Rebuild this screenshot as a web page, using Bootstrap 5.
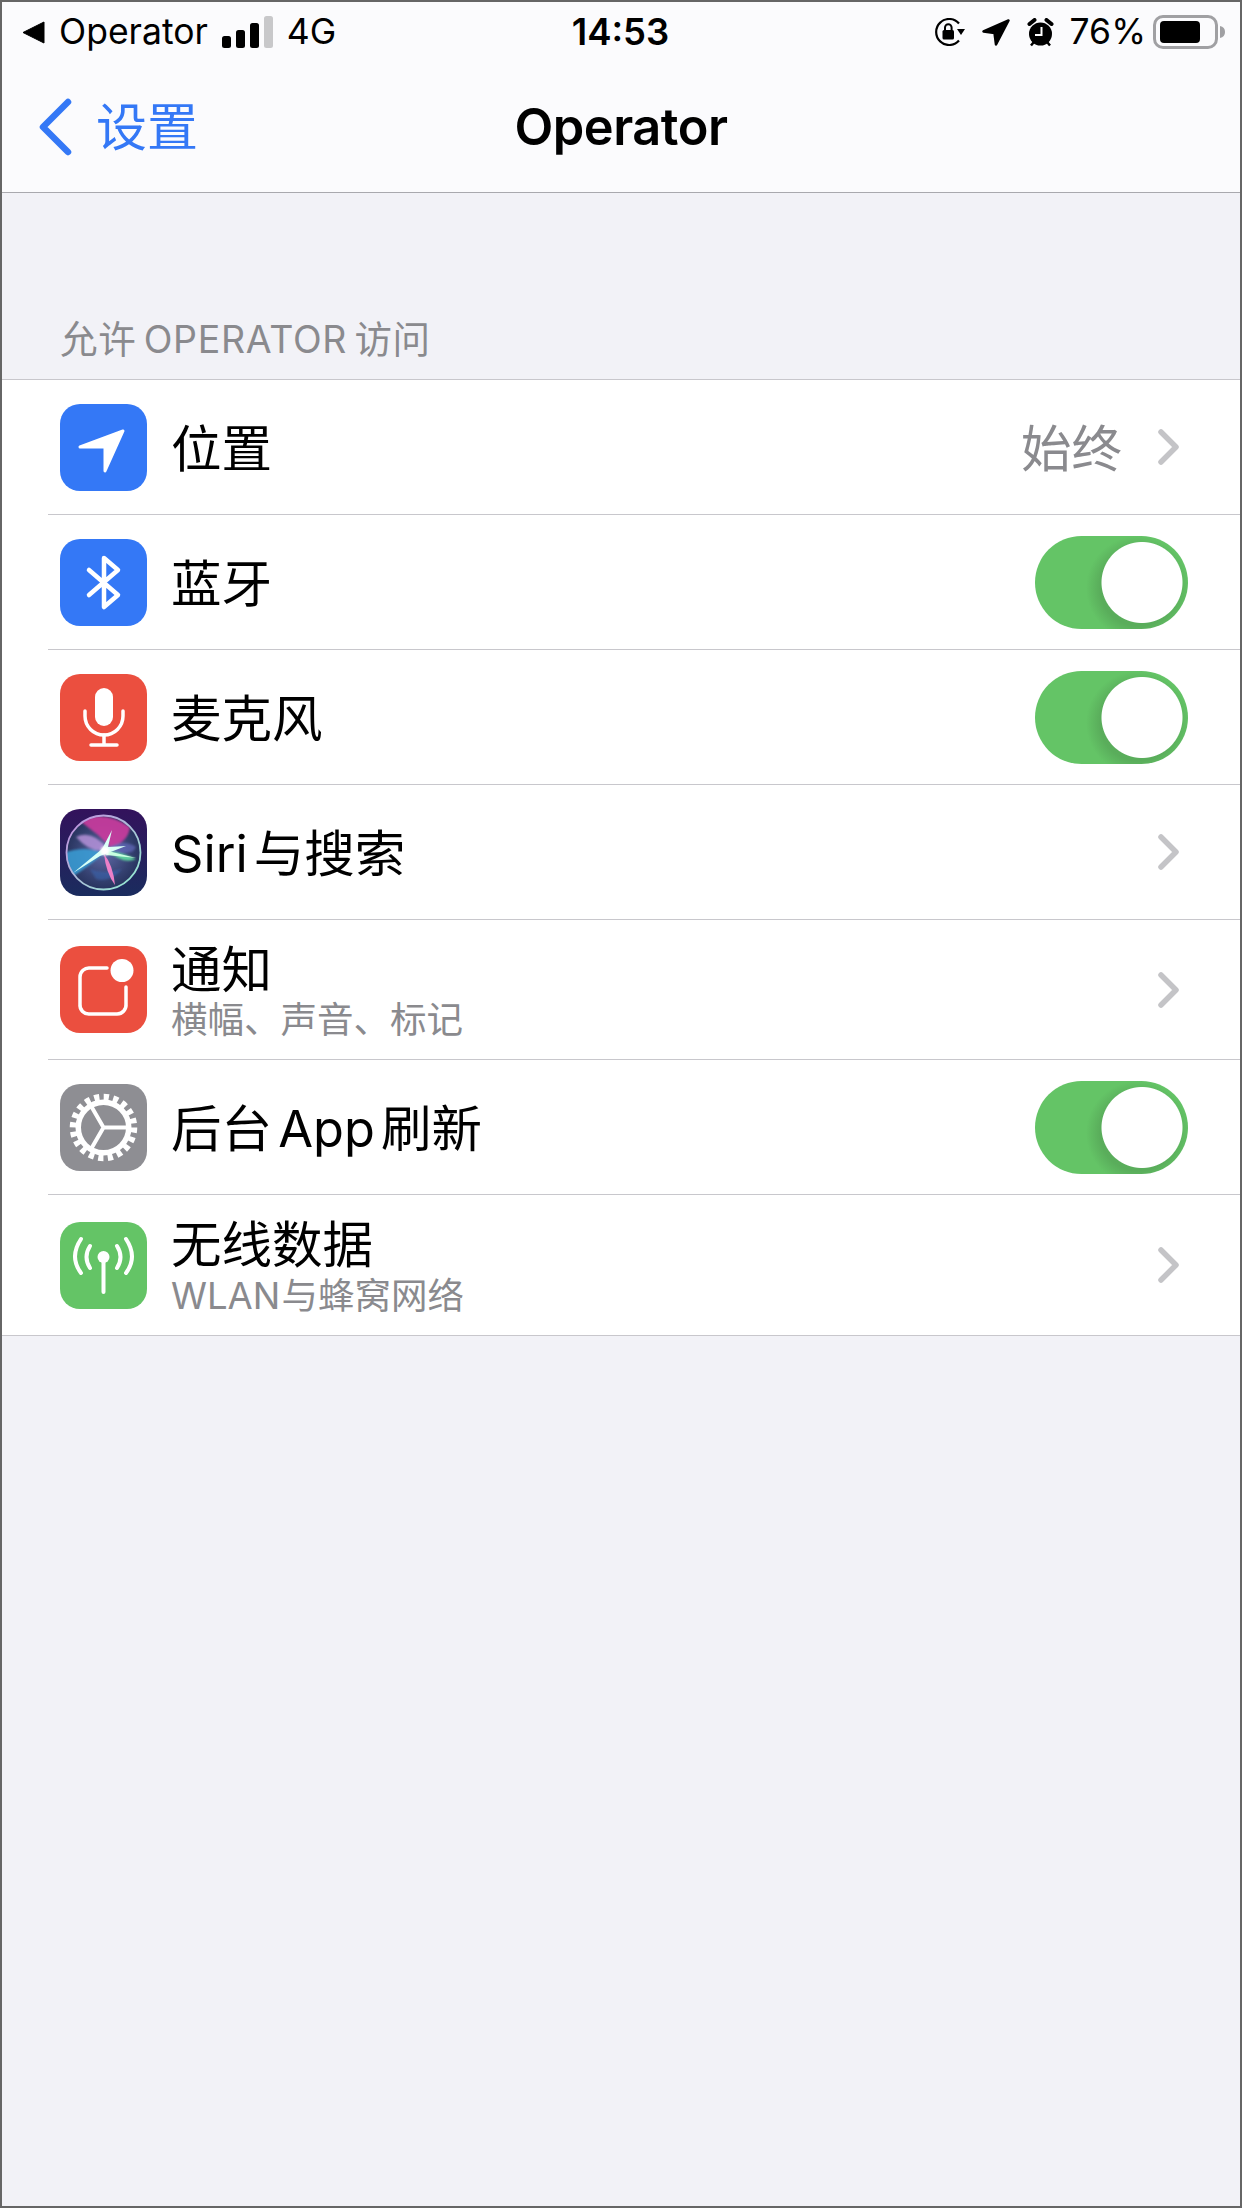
<!DOCTYPE html>
<html lang="zh">
<head>
  <meta charset="UTF-8" />
  <meta name="viewport" content="width=device-width, initial-scale=1.0"/>
  <title>Operator</title>
  <link href="https://cdn.jsdelivr.net/npm/bootstrap@5.3.0/dist/css/bootstrap.min.css" rel="stylesheet"/>
  <style>
    html, body {
      height: 100%;
    }
    body {
      background-color: #f2f2f7;
      font-family: Inter, "Noto Sans CJK SC", sans-serif;
      color: #000;
    }
    .phone-frame {
      height: 2208px;
      border: 2px solid #666;
      overflow: hidden;
    }
    .top-area {
      height: 191px;
      background-color: #fbfbfd;
      border-bottom: 1px solid #a9a9ae;
    }
    .status-row {
      height: 60px;
      padding: 0 14px 0 20px;
      font-size: 35.5px;
      line-height: 1;
      display: grid;
      grid-template-columns: 1fr auto 1fr;
      align-items: center;
    }
    .status-time {
      font-weight: 600;
      font-size: 36.5px;
      margin-right: 7px;
    }
    .gap-status {
      margin-left: 14px;
    }
    .gap-right {
      margin-right: 17px;
    }
    .gap-alarm {
      margin-right: 16px;
    }
    .battery-icon {
      margin-left: 7px;
    }
    .title-row {
      height: 130px;
      display: grid;
      grid-template-columns: 1fr auto 1fr;
      align-items: center;
      padding: 0 36px;
    }
    .back-link {
      color: #3478f6;
      font-size: 51px;
      text-decoration: none;
      line-height: 1;
    }
    .back-link svg {
      margin-right: 24px;
    }
    .page-title {
      font-size: 50.5px;
      font-weight: 600;
      letter-spacing: -0.5px;
    }
    .section-label {
      height: 186px;
      padding: 0 0 0 58px;
      color: #8a8a8e;
      font-size: 37.5px;
      line-height: 1;
      letter-spacing: 0.7px;
      word-spacing: -4px;
    }
    .label-text {
      padding-bottom: 21px;
    }
    .perm-list {
      background-color: #fff;
      border-top: 1px solid #c8c7cc;
      border-bottom: 1px solid #c8c7cc;
    }
    .perm-row {
      height: 135px;
      margin-left: 46px;
      padding-left: 12px;
      padding-right: 59px;
      border-bottom: 1px solid #c8c7cc;
      font-size: 50.5px;
      line-height: 1;
    }
    .perm-row.tall {
      height: 140px;
    }
    .perm-row:last-child {
      border-bottom: 0;
    }
    .row-text {
      padding-top: 4px;
      word-spacing: -8px;
    }
    .app-icon {
      width: 87px;
      height: 87px;
      border-radius: 20px;
      flex-shrink: 0;
      margin-right: 24px;
    }
    .icon-blue { background-color: #3478f6; }
    .icon-red { background-color: #eb4f3f; }
    .icon-gray { background-color: #8e8e93; }
    .icon-green { background-color: #64c466; }
    .sub-text {
      color: #8a8a8e;
      font-size: 36.5px;
      margin-top: 7px;
      word-spacing: -9px;
    }
    .side-value {
      color: #8a8a8e;
      margin-right: 35px;
      padding-top: 4px;
    }
    .ios-toggle.form-check-input {
      width: 153px;
      height: 93px;
      margin: 0 -7px 0 0;
      border: 0;
      border-radius: 47px;
      background-color: #64c466;
      background-position: 0 0;
      background-size: auto;
      background-image:
        radial-gradient(circle 41px at 107px 46.5px, #fff 40px, rgba(255,255,255,0) 41px),
        radial-gradient(circle 52px at 103px 52px, rgba(70,130,70,.35) 38px, rgba(100,196,102,0) 52px);
      box-shadow: none;
    }
  </style>
</head>
<body>
  <div class="phone-frame d-flex flex-column">
    <div class="top-area">
      <div class="status-row">
        <div class="d-flex align-items-center">
          <svg width="23" height="23" viewBox="0 0 23 23"><path d="M22 1 V22 L1 11.500 Z" fill="#000" stroke="#000" stroke-linejoin="round"/></svg>
          <span class="gap-status">Operator</span>
          <svg width="51" height="32" viewBox="0 0 51 32" class="gap-status"><rect x="0" y="20" width="9" height="12" rx="2.500" fill="#000"/><rect x="14" y="14" width="9" height="18" rx="2.500" fill="#000"/><rect x="28" y="7" width="9" height="25" rx="2.500" fill="#000"/><rect x="42" y="0" width="9" height="32" rx="2.500" fill="#c8c8ca"/></svg>
          <span class="gap-status">4G</span>
        </div>
        <div class="status-time">14:53</div>
        <div class="d-flex align-items-center justify-content-end">
          <svg width="31" height="28" viewBox="0 0 31 28" class="gap-right"><path d="M25 22.500 A13 13 0 1 1 25 5.500" fill="none" stroke="#000" stroke-width="2.200"/><path d="M23 11 h8 l-4 6 z" fill="#000"/><rect x="8.500" y="12" width="11.500" height="9.500" rx="1.500" fill="#000"/><path d="M11 12 v-2.500 a3.300 3.300 0 0 1 6.600 0 v2.500" fill="none" stroke="#000" stroke-width="2"/></svg>
          <svg width="28" height="27" viewBox="0 0 28 27" class="gap-right"><path d="M26.500 1.500 L14 25.500 L12.500 14 L1.500 12.500 Z" fill="#000" stroke="#000" stroke-width="2.500" stroke-linejoin="round"/></svg>
          <svg width="27" height="29" viewBox="0 0 27 29" class="gap-alarm"><circle cx="13.500" cy="16" r="11.500" fill="#000"/><path d="M2.500 6 L7.500 2 M24.500 6 L19.500 2" stroke="#000" stroke-width="4" stroke-linecap="round"/><path d="M4 27.500 l2.500 -3 M23 27.500 l-2.500 -3" stroke="#000" stroke-width="2.500"/><path d="M14.500 9 v8 h-6.500" fill="none" stroke="#fff" stroke-width="2"/></svg>
          <span>76%</span>
          <svg width="73" height="34" viewBox="0 0 73 34" class="battery-icon flex-shrink-0"><rect x="1.500" y="1.500" width="62" height="31" rx="8.500" fill="none" stroke="#a0a0a3" stroke-width="3"/><rect x="7" y="6" width="40" height="22" rx="4" fill="#000"/><path d="M67 11 q5 1 5 6 t-5 6 z" fill="#a0a0a3"/></svg>
        </div>
      </div>
      <div class="title-row">
        <a href="#" class="back-link d-flex align-items-center">
          <svg width="34" height="58" viewBox="0 0 34 58"><path d="M30 4 L5 29 L30 54" fill="none" stroke="#3478f6" stroke-width="6.500" stroke-linecap="round" stroke-linejoin="round"/></svg>
          <span>设置</span>
        </a>
        <div class="page-title">Operator</div>
        <div></div>
      </div>
    </div>

    <div class="section-label d-flex align-items-end">
      <div class="label-text">允许 OPERATOR 访问</div>
    </div>

    <div class="perm-list">
      <div class="perm-row d-flex align-items-center">
        <div class="app-icon icon-blue">
          <svg width="87" height="87" viewBox="0 0 87 87"><path d="M20 43 L63 27 L45 67 V43 Z" fill="#fff" stroke="#fff" stroke-width="3" stroke-linejoin="round"/></svg>
        </div>
        <div class="row-text flex-grow-1">位置</div>
        <div class="side-value">始终</div>
        <svg width="24" height="40" viewBox="0 0 24 40"><path d="M4 5 L19 20 L4 35" fill="none" stroke="#c4c4c7" stroke-width="5.500" stroke-linecap="round" stroke-linejoin="round"/></svg>
      </div>
      <div class="perm-row d-flex align-items-center">
        <div class="app-icon icon-blue">
          <svg width="87" height="87" viewBox="0 0 87 87"><path d="M29 31 L58 56 L44 68 V19 L58 31 L29 56" fill="none" stroke="#fff" stroke-width="4.500" stroke-linecap="round" stroke-linejoin="round"/></svg>
        </div>
        <div class="row-text flex-grow-1">蓝牙</div>
        <input class="form-check-input ios-toggle" type="checkbox" checked aria-label="蓝牙"/>
      </div>
      <div class="perm-row d-flex align-items-center">
        <div class="app-icon icon-red">
          <svg width="87" height="87" viewBox="0 0 87 87"><rect x="35" y="14" width="18" height="38" rx="9" fill="#fff"/><path d="M25 37 V42 A19 19 0 0 0 63 42 V37" fill="none" stroke="#fff" stroke-width="3.500" stroke-linecap="round"/><path d="M44 61 V71 M31 71 H57" fill="none" stroke="#fff" stroke-width="3.500" stroke-linecap="round"/></svg>
        </div>
        <div class="row-text flex-grow-1">麦克风</div>
        <input class="form-check-input ios-toggle" type="checkbox" checked aria-label="麦克风"/>
      </div>
      <div class="perm-row d-flex align-items-center">
        <div class="app-icon">
          <svg width="87" height="87" viewBox="0 0 87 87">
            <defs>
              <linearGradient id="siriBg" x1="0" y1="0" x2="0" y2="1"><stop offset="0" stop-color="#33125c"/><stop offset="1" stop-color="#1a2c5e"/></linearGradient>
              <radialGradient id="siriBall" cx=".5" cy=".5" r=".5"><stop offset="0" stop-color="#5f6aa8"/><stop offset=".75" stop-color="#34406f"/><stop offset="1" stop-color="#28345f"/></radialGradient>
              <linearGradient id="siriRing" x1="0" y1="0" x2="1" y2="1"><stop offset="0" stop-color="#c58ae0"/><stop offset="1" stop-color="#90f0d0"/></linearGradient>
              <filter id="siriBlur"><feGaussianBlur stdDeviation="1.200"/></filter>
              <filter id="siriSoft"><feGaussianBlur stdDeviation=".5"/></filter>
              <clipPath id="siriClip"><circle cx="43.500" cy="43.500" r="37"/></clipPath>
            </defs>
            <rect width="87" height="87" rx="20" fill="url(#siriBg)"/>
            <circle cx="43.500" cy="43.500" r="37" fill="url(#siriBall)"/>
            <g clip-path="url(#siriClip)">
              <g filter="url(#siriBlur)">
                <path d="M20 12 Q44 0 70 18 Q68 34 50 38 Q42 30 38 26 Q30 20 20 12 Z" fill="#cc3a9e" opacity=".9"/>
                <path d="M16 28 Q32 20 48 40 Q32 46 16 28 Z" fill="#b490d8" opacity=".85"/>
                <path d="M4 44 Q24 36 44 44 Q28 58 12 68 Z" fill="#3aa0d8" opacity=".85"/>
                <path d="M50 38 Q64 30 76 38 Q72 48 50 42 Z" fill="#6a70c8" opacity=".6"/>
                <path d="M48 42 Q64 44 76 50 Q64 56 48 42 Z" fill="#5fd8a0" opacity=".95"/>
                <path d="M30 60 Q44 66 62 60 Q50 74 36 70 Z" fill="#3a68b8" opacity=".5"/>
              </g>
              <g filter="url(#siriSoft)">
                <path d="M44 45 Q53 56 55 76 Q46 64 44 45 Z" fill="#ec80c8"/>
                <path d="M13 64 L42 40 L52 21 L48 38 L66 37 L48 44 L40 47 Z" fill="#d8fff6"/>
                <path d="M48 42 L76 49 L46 46 Z" fill="#c8ffe0"/>
              </g>
              <circle cx="45" cy="42" r="4.500" fill="#fff" filter="url(#siriBlur)"/>
            </g>
            <circle cx="43.500" cy="43.500" r="37" fill="none" stroke="url(#siriRing)" stroke-width="1.800"/>
          </svg>
        </div>
        <div class="row-text flex-grow-1">Siri 与搜索</div>
        <svg width="24" height="40" viewBox="0 0 24 40"><path d="M4 5 L19 20 L4 35" fill="none" stroke="#c4c4c7" stroke-width="5.500" stroke-linecap="round" stroke-linejoin="round"/></svg>
      </div>
      <div class="perm-row tall d-flex align-items-center">
        <div class="app-icon icon-red">
          <svg width="87" height="87" viewBox="0 0 87 87"><path d="M47 22 H30 A9 9 0 0 0 20 31 V58 A9 9 0 0 0 30 68 H57 A9 9 0 0 0 66 58 V41" fill="none" stroke="#fff" stroke-width="3.500" stroke-linecap="round"/><circle cx="62" cy="24.500" r="11.500" fill="#fff"/></svg>
        </div>
        <div class="row-text flex-grow-1">
          <div>通知</div>
          <div class="sub-text">横幅、声音、标记</div>
        </div>
        <svg width="24" height="40" viewBox="0 0 24 40"><path d="M4 5 L19 20 L4 35" fill="none" stroke="#c4c4c7" stroke-width="5.500" stroke-linecap="round" stroke-linejoin="round"/></svg>
      </div>
      <div class="perm-row d-flex align-items-center">
        <div class="app-icon icon-gray">
          <svg width="87" height="87" viewBox="0 0 87 87"><circle cx="43.500" cy="43.500" r="25.250" fill="none" stroke="#fff" stroke-width="5.500"/><circle cx="43.500" cy="43.500" r="30.500" fill="none" stroke="#fff" stroke-width="6.500" stroke-dasharray="5.200 4.380"/><path d="M43.500 43.500 L31.500 22.700 M43.500 43.500 H67.500 M43.500 43.500 L31.500 64.300" fill="none" stroke="#fff" stroke-width="4"/></svg>
        </div>
        <div class="row-text flex-grow-1">后台 App 刷新</div>
        <input class="form-check-input ios-toggle" type="checkbox" checked aria-label="后台 App 刷新"/>
      </div>
      <div class="perm-row tall d-flex align-items-center">
        <div class="app-icon icon-green">
          <svg width="87" height="87" viewBox="0 0 87 87"><circle cx="43.500" cy="35" r="6" fill="#fff"/><path d="M43.500 38 V70" stroke="#fff" stroke-width="4" stroke-linecap="round"/><path d="M30 24 Q23 35 30 46 M57 24 Q64 35 57 46 M21 17 Q9 35 21 51 M66 17 Q78 35 66 51" fill="none" stroke="#fff" stroke-width="4" stroke-linecap="round"/></svg>
        </div>
        <div class="row-text flex-grow-1">
          <div>无线数据</div>
          <div class="sub-text">WLAN 与蜂窝网络</div>
        </div>
        <svg width="24" height="40" viewBox="0 0 24 40"><path d="M4 5 L19 20 L4 35" fill="none" stroke="#c4c4c7" stroke-width="5.500" stroke-linecap="round" stroke-linejoin="round"/></svg>
      </div>
    </div>
    <div class="flex-grow-1"></div>
  </div>

  <script src="https://cdn.jsdelivr.net/npm/bootstrap@5.3.0/dist/js/bootstrap.bundle.min.js"></script>
</body>
</html>
